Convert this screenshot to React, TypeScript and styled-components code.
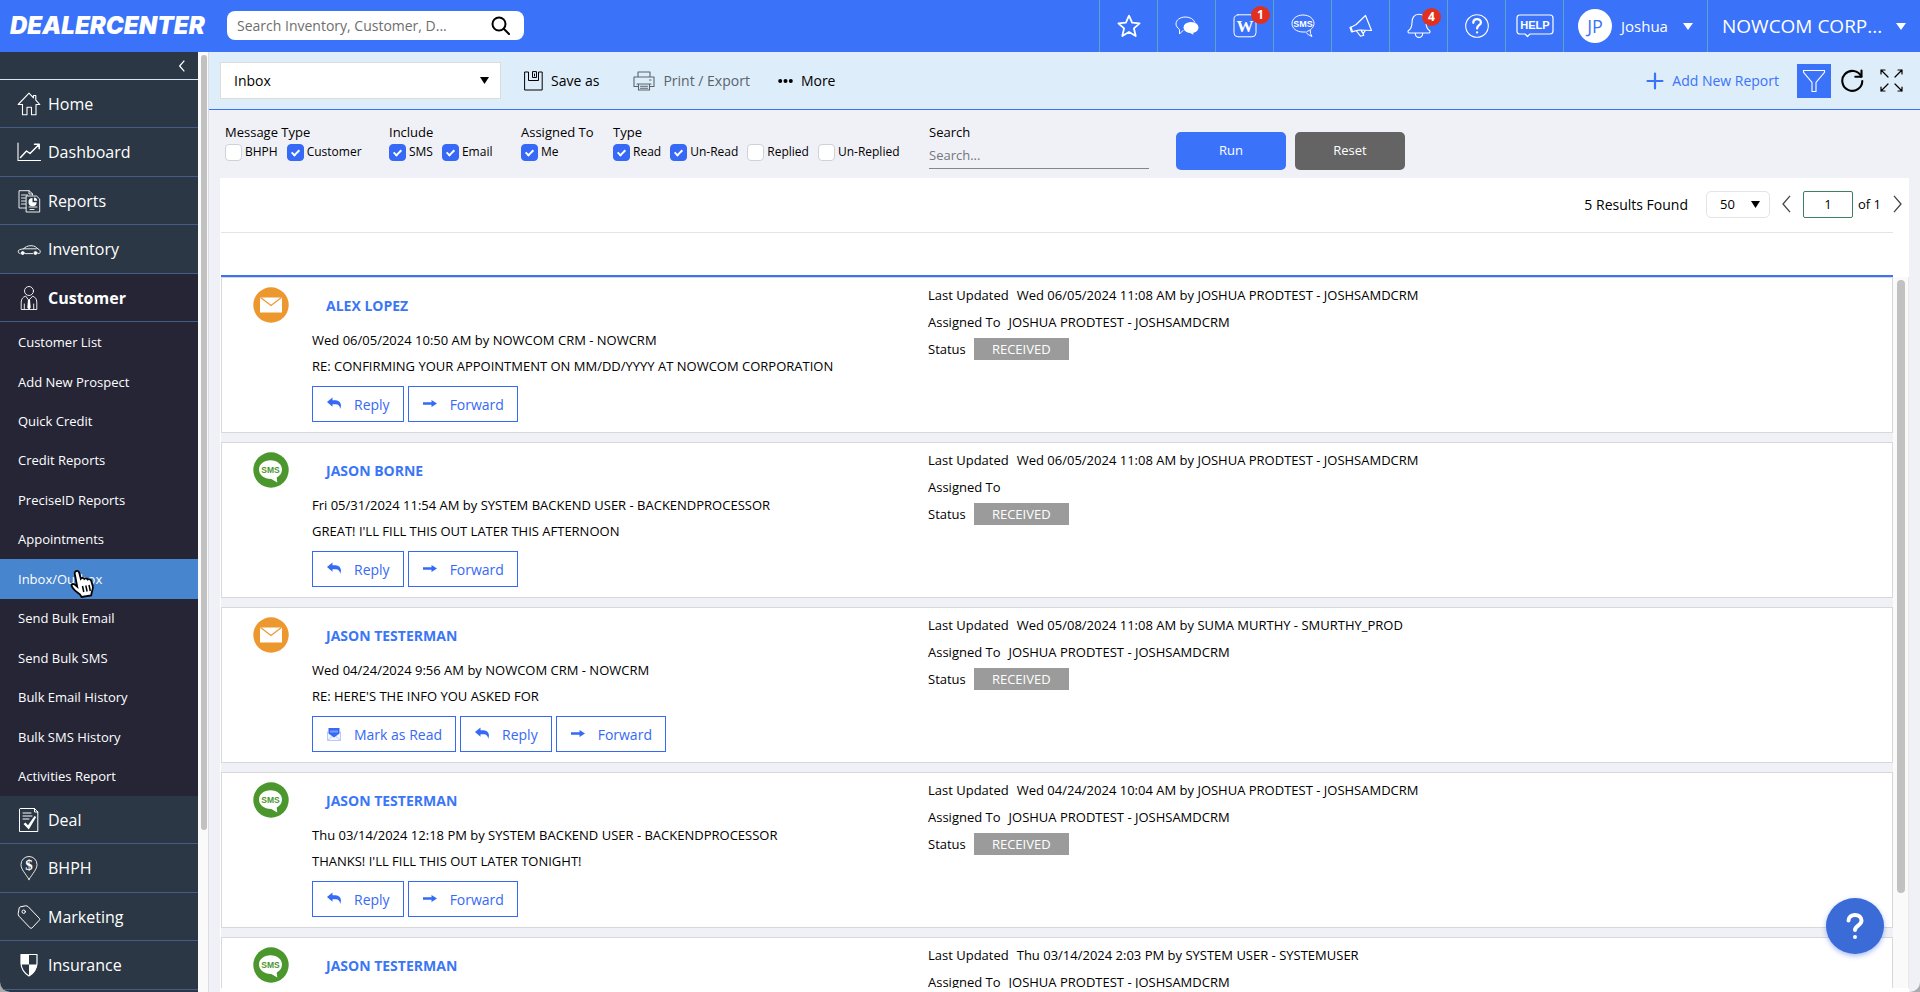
import React, { useState } from 'react';
import styled, { createGlobalStyle, css } from 'styled-components';

const blue = '#3a72fa';
const link = '#3669f5';
const line = '#d8d8d8';
const pale = '#f0f1f6';

const GlobalStyle = createGlobalStyle`
  *, *::before, *::after { box-sizing: border-box; }
  body { margin: 0; background: #a9abae; font-family: "Open Sans", "Noto Sans", sans-serif; font-size: 13px; color: #000; }
  button, input, select { font: inherit; color: inherit; }
  button { border: 0; padding: 0; background: none; cursor: pointer; }
  a { text-decoration: none; color: inherit; }
  ul { margin: 0; padding: 0; list-style: none; }
  svg { display: block; flex: none; }
`;

const Shell = styled.div`
  display: flex;
  flex-direction: column;
  height: 100vh;
  overflow: hidden;
  border-radius: 0 0 10px 10px;
  background: ${pale};
`;

/* ---------- top bar ---------- */
const TopBar = styled.header`
  display: flex;
  align-items: stretch;
  flex: none;
  height: 52px;
  padding-left: 10px;
  background: ${blue};
  color: #fff;
`;
const Brand = styled.a`
  align-self: center;
  width: 217px;
  font: italic 900 24px/30px Inter, "Liberation Sans", sans-serif;
`;
const SearchBox = styled.form`
  display: flex;
  align-items: center;
  align-self: flex-start;
  width: 297px;
  height: 29px;
  margin-top: 11px;
  padding: 0 14px 0 10px;
  border-radius: 8px;
  background: #fff;
  color: #000;
`;
const SearchInput = styled.input`
  flex: 1;
  min-width: 0;
  border: 0;
  padding: 0;
  outline: 0;
  background: none;
  font-size: 14px;
  &::placeholder { color: #6e6e6e; opacity: 1; }
`;
const TopActions = styled.nav`
  display: flex;
  margin-left: auto;
`;
const cell = css`
  display: flex;
  align-items: center;
  border-left: 1px solid #5aa5c0;
  color: #fff;
`;
const TopButton = styled.button`
  ${cell}
  position: relative;
  justify-content: center;
  width: 58px;
`;
const Badge = styled.span<{ $high?: boolean }>`
  position: absolute;
  top: ${p => (p.$high ? 6 : 8)}px;
  left: ${p => (p.$high ? 35 : 32)}px;
  width: 19px;
  height: 18px;
  border-radius: 50%;
  background: #e2301f;
  font-size: 12px;
  font-weight: 700;
  line-height: 18px;
  text-align: center;
`;
const UserButton = styled.button`
  ${cell}
  width: 144px;
  padding: 0 14px;
  font-size: 15px;
`;
const Avatar = styled.span`
  width: 34px;
  height: 34px;
  margin-right: 9px;
  border-radius: 50%;
  background: #fff;
  color: ${blue};
  font-size: 18px;
  line-height: 34px;
  text-align: center;
`;
const CompanyButton = styled.button`
  ${cell}
  width: 213px;
  padding: 0 14px;
  font-size: 19px;
`;
const Push = styled.span`
  flex: 1;
  text-align: left;
`;

/* ---------- side menu ---------- */
const Body = styled.div`
  display: flex;
  flex: 1;
  min-height: 0;
`;
const Sidebar = styled.nav`
  display: flex;
  flex-direction: column;
  flex: none;
  width: 198px;
  overflow: hidden;
  background: #2b3744;
  color: #fff;
`;
const Collapse = styled.button`
  display: flex;
  flex: none;
  align-items: center;
  justify-content: flex-end;
  height: 28px;
  padding-right: 13px;
  border-bottom: 1px solid #d5e6f0;
  color: #fff;
`;
const Menu = styled.ul`
  display: flex;
  flex: 1;
  flex-direction: column;
  padding-bottom: 2px;
`;
const MenuItem = styled.li<{ $open?: boolean }>`
  flex: 1 0 48px;
  border-bottom: 1px solid #435e86;
  background: ${p => (p.$open ? '#252536' : 'none')};
  font-weight: ${p => (p.$open ? 700 : 400)};
`;
const MenuLink = styled.a`
  display: flex;
  align-items: center;
  gap: 7px;
  height: 100%;
  padding-left: 17px;
  font-size: 16px;
`;
const SubItem = styled.li<{ $active?: boolean }>`
  position: relative;
  flex: 1 0 39px;
  background: ${p => (p.$active ? '#4785cf' : '#252536')};
`;
const SubLink = styled.a`
  display: flex;
  align-items: center;
  height: 100%;
  padding-left: 18px;
`;
const Pointer = styled.span`
  position: absolute;
  top: 10px;
  left: 70px;
  pointer-events: none;
`;
const Track = styled.div<{ $inner?: boolean }>`
  flex: none;
  width: ${p => (p.$inner ? 16 : 11)}px;
  padding: 3px ${p => (p.$inner ? 4 : 3)}px;
  border: solid ${p => (p.$inner ? '#e8e8e8' : '#dcdde2')};
  border-width: 0 1px 0 0;
  background: #fafafa;
`;
const Thumb = styled.div<{ $inner?: boolean }>`
  width: ${p => (p.$inner ? 8 : 6)}px;
  height: ${p => (p.$inner ? 87 : 83)}%;
  border-radius: 4px;
  background: #c1c1c1;
`;

/* ---------- report toolbar ---------- */
const Main = styled.main`
  display: flex;
  flex: 1;
  flex-direction: column;
  min-width: 0;
`;
const Toolbar = styled.div`
  display: flex;
  flex: none;
  align-items: center;
  height: 58px;
  padding: 0 17px 0 11px;
  border-bottom: 1px solid ${blue};
  background: #deedfa;
  font-size: 14px;
`;
const Picker = styled.div`
  display: flex;
  align-items: center;
  width: 281px;
  height: 37px;
  margin-right: 23px;
  padding-right: 11px;
  border: 1px solid #dcdcdc;
  background: #fff;
`;
const BareSelect = styled.select`
  flex: 1;
  min-width: 0;
  height: 100%;
  padding: 0 0 0 13px;
  border: 0;
  outline: 0;
  appearance: none;
  background: none;
`;
const Tool = styled.button<{ $muted?: boolean; $blue?: boolean }>`
  display: flex;
  align-items: center;
  gap: 8px;
  margin-right: ${p => (p.$blue ? 18 : p.$muted ? 28 : 34)}px;
  color: ${p => (p.$blue ? blue : p.$muted ? '#5a646c' : '#000')};
`;
const Right = styled.div`
  display: flex;
  align-items: center;
  margin-left: auto;
`;
const FilterButton = styled.button`
  display: grid;
  place-items: center;
  width: 34px;
  height: 34px;
  margin-right: 10px;
  background: ${blue};
`;
const IconButton = styled.button`
  margin-right: 16px;
  &:last-child { margin-right: 0; }
`;

/* ---------- filters ---------- */
const Filters = styled.form`
  display: grid;
  flex: none;
  grid-template-columns: 164px 132px 92px 316px 247px auto;
  justify-content: start;
  height: 68px;
  padding: 13px 16px 0;
`;
const Group = styled.div`
  line-height: 18px;
`;
const Ticks = styled.div`
  display: flex;
  gap: 9px;
  margin-top: 3px;
  font-size: 12px;
  line-height: 16px;
`;
const TickLabel = styled.label`
  display: flex;
  gap: 3px;
  white-space: nowrap;
`;
const Tick = styled.input`
  position: relative;
  width: 17px;
  height: 17px;
  margin: 0;
  border: 1px solid #cfd1da;
  border-radius: 4px;
  appearance: none;
  background: #fff;
  &:checked { border-color: ${link}; background: ${link}; }
  &:checked::after {
    content: "";
    position: absolute;
    top: 3px;
    left: 5px;
    width: 5px;
    height: 8px;
    border: solid #fff;
    border-width: 0 2px 2px 0;
    transform: rotate(45deg);
  }
`;
const FieldLabel = styled.label`
  display: block;
`;
const LineInput = styled.input`
  display: block;
  width: 220px;
  height: 28px;
  padding: 0;
  border: 0;
  border-bottom: 1px solid #85868c;
  border-radius: 0;
  outline: 0;
  background: none;
  &::placeholder { color: #75767c; opacity: 1; }
`;
const Buttons = styled.div`
  display: flex;
  gap: 9px;
  padding-top: 9px;
`;
const Solid = styled.button<{ $grey?: boolean }>`
  width: 110px;
  height: 38px;
  padding-bottom: 2px;
  border-radius: 5px;
  background: ${p => (p.$grey ? '#646464' : blue)};
  color: #fff;
`;

/* ---------- results ---------- */
const Panel = styled.section`
  display: flex;
  flex: 1;
  flex-direction: column;
  min-height: 0;
  margin: 0 11px;
  padding: 0 0 4px 1px;
  background: #fff;
`;
const Pager = styled.div`
  display: flex;
  flex: none;
  align-items: center;
  justify-content: flex-end;
  height: 54px;
  padding: 0 7px 2px 0;
`;
const Count = styled.span`
  margin-right: 18px;
  font-size: 14px;
`;
const PageSize = styled.div`
  display: flex;
  align-items: center;
  width: 64px;
  height: 27px;
  margin-right: 12px;
  padding-right: 9px;
  border: 1px solid #e4e4e4;
  border-radius: 5px;
`;
const PageButton = styled.button`
  color: #444;
`;
const PageInput = styled.input`
  width: 50px;
  height: 27px;
  margin: 0 5px 0 12px;
  border: 1px solid #3f7f62;
  border-radius: 2px;
  outline: 0;
  text-align: center;
`;
const Of = styled.span`
  margin-right: 12px;
`;
const HeadRow = styled.div`
  flex: none;
  height: 45px;
  margin-right: 16px;
  border-top: 1px solid #e4e4e4;
  border-bottom: 2px solid ${blue};
`;
const Scroller = styled.div`
  display: flex;
  flex: 1;
  min-height: 0;
`;
const List = styled.ul`
  flex: 1;
  overflow-y: auto;
  scrollbar-width: none;
  background: ${pale};
`;
const Card = styled.li`
  display: grid;
  grid-template-columns: 90px 616fr 964fr;
  height: 156px;
  margin-bottom: 9px;
  border: 1px solid ${line};
  background: #fff;
`;
const Kind = styled.div`
  padding: 9px 0 0 31px;
`;
const Message = styled.div`
  padding-top: 18px;
`;
const Sender = styled.a`
  display: block;
  margin: 0 0 11px 14px;
  color: #3b76f6;
  font-size: 14px;
  font-weight: 700;
  line-height: 20px;
`;
const Line = styled.div`
  display: flex;
  align-items: center;
  gap: 8px;
  height: 26px;
  white-space: nowrap;
`;
const Actions = styled.div`
  display: flex;
  gap: 4px;
  margin-top: 7px;
`;
const Action = styled.button`
  display: flex;
  align-items: center;
  gap: 12px;
  height: 36px;
  padding: 0 13px;
  border: 1px solid ${link};
  background: #fff;
  color: ${link};
  font-size: 14px;
`;
const Details = styled.div`
  display: grid;
  align-content: start;
  gap: 1px;
  padding-top: 4px;
`;
const Status = styled.span`
  width: 95px;
  height: 22px;
  background: #9b9b9b;
  color: #fff;
  line-height: 22px;
  text-align: center;
`;
const HelpBubble = styled.button`
  position: fixed;
  right: 36px;
  bottom: 38px;
  display: grid;
  place-items: center;
  width: 58px;
  height: 56px;
  border-radius: 50%;
  background: #3a6bd6;
  box-shadow: 0 2px 5px rgba(60, 100, 230, 0.45);
`;

/* ---------- icons ---------- */
type Draw = { w: number; h: number; s?: number; children: React.ReactNode };
const Svg = ({ w, h, s = 1.3, children }: Draw) => (
  <svg width={w} height={h} viewBox={`0 0 ${w} ${h}`} fill="none" stroke="currentColor" strokeWidth={s} strokeLinejoin="round" strokeLinecap="round" aria-hidden="true">
    {children}
  </svg>
);
const Caret = ({ w = 10, h = 8 }: { w?: number; h?: number }) => (
  <svg width={w} height={h} viewBox="0 0 10 8" preserveAspectRatio="none" fill="currentColor" aria-hidden="true"><path d="M0 0h10L5 8z" /></svg>
);
const Chevron = ({ back, w = 9, h = 18, s = 1.3 }: { back?: boolean; w?: number; h?: number; s?: number }) => (
  <svg width={w} height={h} viewBox="0 0 9 18" fill="none" stroke="currentColor" strokeWidth={s} aria-hidden="true"><path d={back ? 'M8 .8 1 9l7 8.2' : 'M1 .8 8 9l-7 8.2'} /></svg>
);
const art = { fontFamily: 'Liberation Sans, sans-serif', fontWeight: 700, textAnchor: 'middle' as const, stroke: 'none', fill: 'currentColor' };

const menuIcons: Record<string, React.ReactNode> = {
  Home: <Svg w={24} h={24} s={1.100}><path d="M5.500 12.500H1.200L12 1.200l4.500 4.700V3.500h2.300v4.600l4 4.400h-3.800v10.300h-4.500v-7.600h-4.500v7.600H5.500z" /></Svg>,
  Dashboard: <Svg w={24} h={24} s={1.100}><path d="M1 3v17.500h22.500" /><path d="m3.500 17.500 6-6.500 3.500 2.500 9-9M17.500 4.200h4.700v4.600" strokeWidth="1.500" /></Svg>,
  Reports: <Svg w={24} h={24} s={0.900}><path d="M9 19H2V1.700h10l3.500 3V6" /><path d="M4.500 6h6M4.500 9h4M4.500 12h4M4.500 15h4M12 1.700V5h3.500" /><path d="M9.500 7h10l3.200 3v13H9.500z" /><path d="M15.500 9v4.200h4.200a4.100 4.100 0 1 1-4.200-4.200z" fill="currentColor" stroke="none" /><path d="M17 8.600a3.600 3.600 0 0 1 3.300 3.200H17z" fill="currentColor" stroke="none" /><path d="M12 18h8M13 20.500h4" /></Svg>,
  Inventory: <Svg w={24} h={24} s={0.900}><path d="M3 16.500c-1.500-.4-2-1-1.800-2.400.2-1.200 1.800-1.700 5.300-2.300 2-1.800 4-3.100 7.500-3.100 3.600 0 5.300 1.400 7 3.300 1.800.6 2.300 1.600 2.200 3.200 0 .9-.5 1.300-1.700 1.300M8.300 16.600h7.500M6.500 11.800h13" /><circle cx="5.700" cy="16" r="1.500" fill="currentColor" /><circle cx="18.500" cy="16" r="1.500" fill="currentColor" /></Svg>,
  Customer: <Svg w={24} h={26} s={0.900}><circle cx="12" cy="6" r="4.500" /><path d="M8.300 11.200C5.500 12.200 4.500 14 4.200 17v7.500h15.600V17c-.3-3-1.300-4.800-4.100-5.800L12 15z" /><path d="M7.300 19v5M16.700 19v5" /><path d="m11 14.800-.7 8 1.700 1.600 1.700-1.600-.7-8z" fill="currentColor" stroke="none" /></Svg>,
  Deal: <Svg w={24} h={26} s={1}><path d="M3.500 1.500h14l3.300 3.500v19.500H2.500v-22zM17.500 1.500V5h3.300M6 6h8M6 9h9M6 12h6" /><path d="m6.500 17 2-1.500 2.500 2.800L17.500 9l1.700 1-7.400 12.500z" fill="currentColor" stroke="none" /></Svg>,
  BHPH: <Svg w={24} h={26} s={0.900}><path d="M12 24.500C8.500 18.500 4 14.500 4 9.500a8 8 0 0 1 16 0c0 5-4.500 9-8 15z" /><text x="12" y="14.500" fontSize="15" {...art} fontFamily="Liberation Serif, serif">$</text></Svg>,
  Marketing: <Svg w={24} h={26} s={1}><path d="M3.500 2.800 8.500 1.800q1.500-.2 2.800 1l11.200 11.700q.7.800-.2 1.700l-7.200 7.700q-1 .9-2 0L2 12.200Q1 11 1.200 9.500L2.200 4z" /><circle cx="6.700" cy="7.700" r="1.700" /></Svg>,
  Insurance: <Svg w={24} h={26} s={1.200}><path d="M4 2.500h16v9q-.5 8-8 12.500-7.500-4.500-8-12.500z" /><path d="M4 2.500h8v10H4zM12 12.500h8q-.8 7.300-8 11.500z" fill="currentColor" stroke="none" /></Svg>,
};

const Envelope = () => (
  <svg width="36" height="36" viewBox="0 0 36 36" role="img" aria-label="Email"><circle cx="18" cy="18" r="17.700" fill="#ed972f" /><path d="M7 10.500h22v15H7z" fill="#fff" /><path d="m7.500 10.500 10.500 8 10.500-8" fill="none" stroke="#ed972f" strokeWidth="1.200" /></svg>
);
const SmsKind = () => (
  <svg width="36" height="36" viewBox="0 0 36 36" role="img" aria-label="SMS"><circle cx="18" cy="18" r="17.700" fill="#4b972d" /><path d="M17.500 8.300c6.600 0 11.500 4 11.500 9.300 0 3.500-2 6.500-5.300 8l.6 5-6-3.600c-7 .2-12.300-4-12.300-9.400s4.900-9.300 11.500-9.300z" fill="#fff" /><text x="17.500" y="20.500" fontSize="8.500" {...art} fill="#4b972d">SMS</text></svg>
);

const actionIcons: Record<string, React.ReactNode> = {
  Reply: <svg width="16" height="14" viewBox="0 0 16 14" fill="currentColor" aria-hidden="true"><path d="M1 5 6.500.5v2.800h3.200q4.800.2 5.300 5.200l-.7 3.500q-.6-4.500-4.600-4.700H6.500v2.500z" /></svg>,
  Forward: <svg width="16" height="14" viewBox="0 0 16 14" fill="currentColor" aria-hidden="true"><path d="M1 5.200h8.500V3L15 6.500 9.500 10V7.800H1z" /></svg>,
  'Mark as Read': <svg width="16" height="14" viewBox="0 0 16 14" aria-hidden="true"><path d="M1.500 4.500v9h13v-9" fill="#f4f7ff" stroke="#b9c8fb" /><path d="m1.500 13.500 5-4.500h3l5 4.500" fill="none" stroke="#b9c8fb" /><path d="M2.500 1h11v5.500L8 10.500l-5.500-4z" fill="#3669f5" /><path d="M4 3.500h8v2H4z" fill="#7d9cf8" /></svg>,
};

const Hand = () => (
  <svg width="27" height="30" viewBox="0 0 27 30" aria-hidden="true"><path d="M5.500 2.500c1.500-1.300 3.200-.5 3.700 1.200l1.600 6c1-1.300 2.800-1.200 3.500.2 1-1 2.800-.7 3.400.6 1.300-.8 3-.2 3.500 1.200l1.600 5.500c.5 2-.4 4-1 6l-.7 3.300-9.500 1.500-1.600-2.500c-1.700-1.500-5-3.300-6.800-6-1.200-1.600-2-3-1.500-3.900.8-1 2.700-.7 4 .8l1.500 1.300L4.800 5c-.3-1 0-2 .7-2.500z" fill="#fff" stroke="#000" strokeWidth="1.800" /><path d="m12.500 17 1.300 6M15.800 16.500l1.300 6M19 16l1.300 6" stroke="#000" strokeWidth="1.500" /></svg>
);

/* ---------- data ---------- */
const upper = ['Home', 'Dashboard', 'Reports', 'Inventory', 'Customer'];
const customerPages = ['Customer List', 'Add New Prospect', 'Quick Credit', 'Credit Reports', 'PreciseID Reports', 'Appointments', 'Inbox/Outbox', 'Send Bulk Email', 'Send Bulk SMS', 'Bulk Email History', 'Bulk SMS History', 'Activities Report'];
const lower = ['Deal', 'BHPH', 'Marketing', 'Insurance'];

const filterGroups: { title: string; options: [string, boolean][] }[] = [
  { title: 'Message Type', options: [['BHPH', false], ['Customer', true]] },
  { title: 'Include', options: [['SMS', true], ['Email', true]] },
  { title: 'Assigned To', options: [['Me', true]] },
  { title: 'Type', options: [['Read', true], ['Un-Read', true], ['Replied', false], ['Un-Replied', false]] },
];

const josh = 'JOSHUA PRODTEST - JOSHSAMDCRM';
const messages = [
  { kind: 'email', name: 'ALEX LOPEZ', sent: 'Wed 06/05/2024 10:50 AM by NOWCOM CRM - NOWCRM', text: 'RE: CONFIRMING YOUR APPOINTMENT ON MM/DD/YYYY AT NOWCOM CORPORATION', updated: `Wed 06/05/2024 11:08 AM by ${josh}`, assigned: josh, unread: false },
  { kind: 'sms', name: 'JASON BORNE', sent: 'Fri 05/31/2024 11:54 AM by SYSTEM BACKEND USER - BACKENDPROCESSOR', text: "GREAT! I'LL FILL THIS OUT LATER THIS AFTERNOON", updated: `Wed 06/05/2024 11:08 AM by ${josh}`, assigned: '', unread: false },
  { kind: 'email', name: 'JASON TESTERMAN', sent: 'Wed 04/24/2024 9:56 AM by NOWCOM CRM - NOWCRM', text: "RE: HERE'S THE INFO YOU ASKED FOR", updated: 'Wed 05/08/2024 11:08 AM by SUMA MURTHY - SMURTHY_PROD', assigned: josh, unread: true },
  { kind: 'sms', name: 'JASON TESTERMAN', sent: 'Thu 03/14/2024 12:18 PM by SYSTEM BACKEND USER - BACKENDPROCESSOR', text: "THANKS! I'LL FILL THIS OUT LATER TONIGHT!", updated: `Wed 04/24/2024 10:04 AM by ${josh}`, assigned: josh, unread: false },
  { kind: 'sms', name: 'JASON TESTERMAN', sent: '', text: '', updated: 'Thu 03/14/2024 2:03 PM by SYSTEM USER - SYSTEMUSER', assigned: josh, unread: false },
];

const MainMenuItem = ({ name }: { name: string }) => (
  <MenuItem $open={name === 'Customer'}>
    <MenuLink href="#">{menuIcons[name]}{name}</MenuLink>
  </MenuItem>
);

function TickBox({ name, on }: { name: string; on: boolean }) {
  const [checked, setChecked] = useState(on);
  return (
    <TickLabel>
      <Tick type="checkbox" checked={checked} onChange={e => setChecked(e.target.checked)} />
      {name}
    </TickLabel>
  );
}

export default function App() {
  return (
    <Shell>
      <GlobalStyle />
      <TopBar>
        <Brand href="#">DEALERCENTER</Brand>
        <SearchBox role="search">
          <SearchInput aria-label="Search everything" placeholder="Search Inventory, Customer, D..." />
          <Svg w={19} h={19} s={2}><circle cx="8" cy="8" r="6.500" /><path d="m13 13 5 5" /></Svg>
        </SearchBox>
        <TopActions aria-label="Account">
          <TopButton aria-label="Favorites"><Svg w={24} h={24} s={1.800}><path d="m12 1.700 3.100 7 7.500.7-5.700 5 1.800 7.600-6.700-4-6.700 4 1.800-7.600-5.700-5 7.500-.7z" /></Svg></TopButton>
          <TopButton aria-label="Chat"><Svg w={24} h={24} s={1}><path d="M8 16.500 4.500 20v-4.500C2.500 14 1 12 1 10c0-4 4-7 9.500-7 4.500 0 8.200 2.200 9.300 5.200" /><ellipse cx="16" cy="13.500" rx="7.500" ry="5.500" fill="currentColor" stroke="none" /><path d="M14 18.500h4l.5 2.200z" fill="currentColor" stroke="none" /></Svg></TopButton>
          <TopButton aria-label="Web messages"><Svg w={24} h={24} s={1}><rect x="1" y=".8" width="22" height="22" rx="4" /><text x="12" y="18" fontSize="17" {...art} fontFamily="Liberation Serif, serif">W</text></Svg><Badge $high>1</Badge></TopButton>
          <TopButton aria-label="SMS"><Svg w={24} h={24} s={1}><path d="M16 17.500c3.500-1.200 7-4.200 7-8C23 4.700 18.200 1 12 1S1 4.700 1 9.500 5.500 18 12 18h2.500q2.200 2.800 6.500 4.500-2-2.500-1.800-6.200" /><text x="12" y="12.800" fontSize="9" {...art}>SMS</text></Svg></TopButton>
          <TopButton aria-label="Announcements"><Svg w={24} h={24} s={1.200}><path d="M16.500 1.500 22.500 16.500 10 16l-6.500 1.700-1.500-4.500 5.200-2.700z" /><path d="m2 13-1 .5 1.500 4.300 1-.2M7.500 17l4 5.200 3.300-1-2.500-5M12.500 17.500l2 1.700 1.700-2.500" /></Svg></TopButton>
          <TopButton aria-label="Notifications"><Svg w={24} h={26} s={1.100}><path d="M12 1.200c5 0 7 3.500 7 8.300 0 4.500 1 6.500 3.700 8.200.7.800.3 2-.7 2.300H2c-1-.3-1.400-1.500-.7-2.300C4 16 5 14 5 9.500c0-4.800 2-8.300 7-8.300zM8.300 20.500c.3 5.200 7.100 5.200 7.400 0" /></Svg><Badge>4</Badge></TopButton>
          <TopButton aria-label="Support"><Svg w={24} h={24} s={1.100}><circle cx="12" cy="12" r="11.300" /><path d="M8.300 8.800c0-5 7.600-4.800 7.600-.4 0 2.900-3.800 2.700-3.800 6M12.100 18.300v.1" strokeWidth="2.300" /></Svg></TopButton>
          <TopButton aria-label="Help"><Svg w={38} h={24} s={1.200}><path d="M4 1h30q3 0 3 3v13q0 3-3 3H14l-2.500 2.500L9 20H4q-3 0-3-3V4q0-3 3-3z" /><text x="19" y="14.500" fontSize="11" {...art}>HELP</text></Svg></TopButton>
          <UserButton><Avatar>JP</Avatar><Push>Joshua</Push><Caret h={7} /></UserButton>
          <CompanyButton><Push>NOWCOM CORP...</Push><Caret h={7} /></CompanyButton>
        </TopActions>
      </TopBar>

      <Body>
        <Sidebar aria-label="Main menu">
          <Collapse aria-label="Collapse menu"><Chevron back w={6} h={12} s={1.8} /></Collapse>
          <Menu>
            {upper.map(n => <MainMenuItem key={n} name={n} />)}
            {customerPages.map(n => {
              const active = n === 'Inbox/Outbox';
              return (
                <SubItem key={n} $active={active}>
                  <SubLink href="#">{n}</SubLink>
                  {active && <Pointer><Hand /></Pointer>}
                </SubItem>
              );
            })}
            {lower.map(n => <MainMenuItem key={n} name={n} />)}
          </Menu>
        </Sidebar>
        <Track><Thumb /></Track>

        <Main>
          <Toolbar>
            <Picker><BareSelect aria-label="Report"><option>Inbox</option></BareSelect><Caret w={9} h={7} /></Picker>
            <Tool><Svg w={19} h={20} s={1}><path d="M1 1h3.500v8.500h10V1h3.700v18H1z" /><path d="M8.500 1v5.500h4V1zM10.500 3v2" /></Svg>Save as</Tool>
            <Tool $muted><Svg w={22} h={20} s={1.100}><path d="M5 6V1h12v5M5 15.500H1V6h20v9.500h-4" /><path d="M4 13h14M5.500 13v6h11v-6M7.500 15.300h7M7.500 17.200h7M16.500 9h1.500" /></Svg>Print / Export</Tool>
            <Tool><svg width="15" height="6" viewBox="0 0 15 6" aria-hidden="true"><circle cx="2.200" cy="3" r="2" /><circle cx="7.500" cy="3" r="2" /><circle cx="12.800" cy="3" r="2" /></svg>More</Tool>
            <Right>
              <Tool $blue><Svg w={18} h={18} s={2.200}><path d="M9 1.500v15M1.500 9h15" /></Svg>Add New Report</Tool>
              <FilterButton aria-label="Filter"><svg width="24" height="24" viewBox="0 0 24 24" fill="none" stroke="#fff" strokeWidth="1.100" aria-hidden="true"><path d="M1.500 1.500h21v1.800L14 13.500v9h-4v-9L1.500 3.300z" /></svg></FilterButton>
              <IconButton aria-label="Refresh"><Svg w={23} h={23} s={2.100}><path d="M20.300 7.500a10 10 0 1 0 1 4.500" /><path d="M20.500 1.500v6.300h-6.200" /></Svg></IconButton>
              <IconButton aria-label="Full screen"><Svg w={23} h={23} s={1.200}><path d="M1 5V1h4M1 1l7 7M18 1h4v4M22 1l-7 7M1 18v4h4M1 22l7-7M22 18v4h-4M22 22l-7-7" /></Svg></IconButton>
            </Right>
          </Toolbar>

          <Filters>
            {filterGroups.map(g => (
              <Group key={g.title} role="group" aria-label={g.title}>
                {g.title}
                <Ticks>{g.options.map(([n, on]) => <TickBox key={n} name={n} on={on} />)}</Ticks>
              </Group>
            ))}
            <Group>
              <FieldLabel htmlFor="find">Search</FieldLabel>
              <LineInput id="find" placeholder="Search..." />
            </Group>
            <Buttons>
              <Solid type="button">Run</Solid>
              <Solid type="button" $grey>Reset</Solid>
            </Buttons>
          </Filters>

          <Panel>
            <Pager>
              <Count>5 Results Found</Count>
              <PageSize><BareSelect aria-label="Results per page"><option>50</option></BareSelect><Caret w={9} h={7} /></PageSize>
              <PageButton aria-label="Previous page"><Chevron back /></PageButton>
              <PageInput aria-label="Page" defaultValue="1" />
              <Of>of 1</Of>
              <PageButton aria-label="Next page"><Chevron /></PageButton>
            </Pager>
            <HeadRow />
            <Scroller>
              <List>
                {messages.map((m, i) => (
                  <Card key={i}>
                    <Kind>{m.kind === 'email' ? <Envelope /> : <SmsKind />}</Kind>
                    <Message>
                      <Sender href="#">{m.name}</Sender>
                      <Line>{m.sent}</Line>
                      <Line>{m.text}</Line>
                      <Actions>
                        {(m.unread ? ['Mark as Read', 'Reply', 'Forward'] : ['Reply', 'Forward']).map(a => (
                          <Action key={a}>{actionIcons[a]}{a}</Action>
                        ))}
                      </Actions>
                    </Message>
                    <Details>
                      <Line><span>Last Updated</span><span>{m.updated}</span></Line>
                      <Line><span>Assigned To</span><span>{m.assigned}</span></Line>
                      <Line><span>Status</span><Status>RECEIVED</Status></Line>
                    </Details>
                  </Card>
                ))}
              </List>
              <Track $inner><Thumb $inner /></Track>
            </Scroller>
          </Panel>
        </Main>
      </Body>

      <HelpBubble aria-label="Open help">
        <svg width="20" height="28" viewBox="0 0 20 28" fill="none" stroke="#fff" strokeWidth="4" strokeLinecap="round" aria-hidden="true"><path d="M3.500 8.500C3.500 1 16.500 1 16.500 8.500c0 5-6.500 5-6.500 9.500M10 25v.1" /></svg>
      </HelpBubble>
    </Shell>
  );
}
